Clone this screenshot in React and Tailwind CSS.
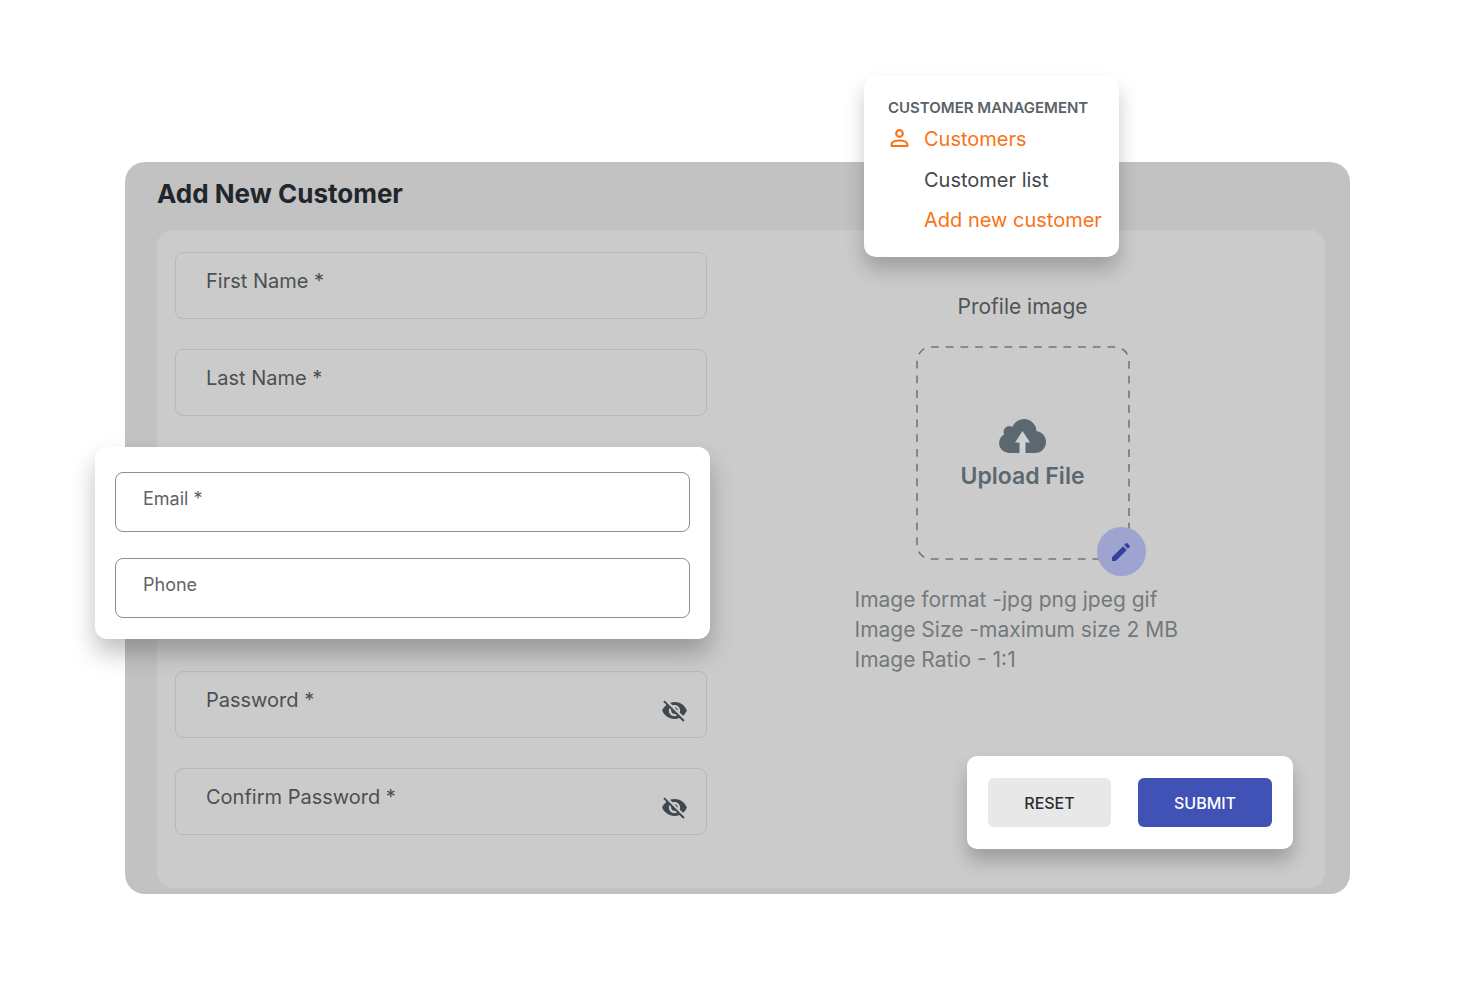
import { useState } from "react";
import { MdEdit, MdVisibility, MdVisibilityOff } from "react-icons/md";

function TextField({ id, label, type = "text" }) {
  return (
    <div className="flex h-[67px] items-start rounded-lg border border-[#b8b8b8] px-[30px] pt-3.5">
      <label htmlFor={id} className="whitespace-nowrap text-xl leading-7 text-[#4c5053]">
        {label}
      </label>
      <input id={id} type={type} className="h-7 min-w-0 flex-1 bg-transparent pl-3 outline-none" />
    </div>
  );
}

function PasswordField({ id, label }) {
  const [visible, setVisible] = useState(false);

  return (
    <div className="flex h-[67px] items-start rounded-lg border border-[#b8b8b8] pl-[30px] pr-[18px] pt-3.5">
      <label htmlFor={id} className="whitespace-nowrap text-xl leading-7 text-[#4c5053]">
        {label}
      </label>
      <input
        id={id}
        type={visible ? "text" : "password"}
        className="h-7 min-w-0 flex-1 bg-transparent pl-3 outline-none"
      />
      <button
        type="button"
        aria-label={visible ? "Hide password" : "Show password"}
        onClick={() => setVisible(!visible)}
        className="mt-[11px] text-[#41484d]"
      >
        {visible ? <MdVisibility size={27} /> : <MdVisibilityOff size={27} />}
      </button>
    </div>
  );
}

function ContactField({ id, label, type }) {
  return (
    <div className="flex h-[60px] items-start rounded-lg border border-[#8f8f8f] px-[27px] pt-3">
      <label htmlFor={id} className="whitespace-nowrap text-lg leading-7 text-[#5f6368]">
        {label}
      </label>
      <input id={id} type={type} className="h-7 min-w-0 flex-1 bg-transparent pl-3 outline-none" />
    </div>
  );
}

function PersonIcon() {
  return (
    <svg width="24" height="20" viewBox="0 0 24 20" fill="none" stroke="currentColor" strokeWidth="2.2" aria-hidden="true">
      <circle cx="11.5" cy="4.500" r="3.300" />
      <path d="M3.600 17v-1.600c0-2.600 4-3.900 7.900-3.900s7.900 1.300 7.900 3.900V17z" strokeLinejoin="round" />
    </svg>
  );
}

function CloudIcon() {
  return (
    <svg width="47" height="34" viewBox="0 0 47 34" aria-hidden="true">
      <g fill="#5c6870">
        <circle cx="25" cy="12.5" r="12.5" />
        <circle cx="10.5" cy="13" r="6" />
        <circle cx="10" cy="24" r="10" />
        <circle cx="36" cy="23" r="11" />
        <path d="M10 12h26v22H10z" />
      </g>
      <path d="M23.5 12 31 23.500H26.500V34h-6V23.500H16z" fill="#cfd2d3" />
    </svg>
  );
}

function CustomerMenu() {
  return (
    <nav className="absolute -top-[86px] right-[231px] w-[255px] rounded-xl bg-white px-6 pb-[17px] pt-[22px] shadow-[0_12px_20px_rgba(0,0,0,0.22)]">
      <h2 className="whitespace-nowrap text-[15px] font-semibold leading-5 text-[#5a6268]">
        CUSTOMER MANAGEMENT
      </h2>
      <a href="#customers" className="flex h-[42px] items-center gap-3 text-xl text-[#f97316]">
        <PersonIcon />
        Customers
      </a>
      <ul className="whitespace-nowrap pl-9 text-xl text-[#44484c]">
        <li>
          <a href="#list" className="flex h-10 items-center">
            Customer list
          </a>
        </li>
        <li>
          <a href="#new" className="flex h-10 items-center text-[#f97316]">
            Add new customer
          </a>
        </li>
      </ul>
    </nav>
  );
}

function ProfileImage() {
  return (
    <div className="flex flex-col items-center">
      <p className="text-[21px] leading-7 text-[#4f5457]">Profile image</p>
      <div className="relative mt-[25px] size-[214px]">
        <svg className="absolute inset-0" width="214" height="214" aria-hidden="true">
          <rect
            x="1"
            y="1"
            width="212"
            height="212"
            rx="14"
            fill="none"
            stroke="#70777b"
            strokeWidth="1.6"
            pathLength="840"
            strokeDasharray="8 7"
          />
        </svg>
        <label
          htmlFor="profileImage"
          className="flex h-full cursor-pointer flex-col items-center gap-[7px] pt-[73px] text-[23px] font-semibold leading-8 text-[#5c6870]"
        >
          <CloudIcon />
          Upload File
        </label>
        <input id="profileImage" type="file" accept="image/*" className="sr-only" />
        <button
          type="button"
          aria-label="Edit image"
          className="absolute -bottom-4 -right-4 flex size-[49px] items-center justify-center rounded-full bg-[#9ea4d0] text-[#34409a]"
        >
          <MdEdit size={24} />
        </button>
      </div>
      <p className="mt-[25px] w-[336px] whitespace-nowrap text-[21px] leading-[30px] text-[#74797c]">
        Image format -jpg png jpeg gif
        <br />
        Image Size -maximum size 2 MB
        <br />
        Image Ratio - 1:1
      </p>
    </div>
  );
}

export default function App() {
  return (
    <div className="min-h-screen bg-white pb-24 pl-[125px] pr-[118px] pt-[162px] font-['Inter','Liberation_Sans',sans-serif]">
      <main className="relative rounded-[20px] bg-[#c2c2c2] pb-1.5 pl-8 pr-[25px] pt-3.5">
        <h1 className="text-[26px] font-bold leading-9 text-[#20262b]">Add New Customer</h1>

        <form
          onSubmit={(e) => e.preventDefault()}
          className="mt-[18px] grid grid-cols-[532fr_541fr] gap-[45px] rounded-2xl bg-[#cbcbcb] pb-[39px] pl-[18px] pr-8 pt-[22px]"
        >
          <div className="flex flex-col gap-[30px] pb-3.5">
            <TextField id="firstName" label="First Name *" />
            <TextField id="lastName" label="Last Name *" />

            {/* Contact details card */}
            <div className="-ml-20 -mr-[3px] mb-0.5 mt-px flex flex-col gap-[26px] rounded-xl bg-white px-5 pb-[21px] pt-[25px] shadow-[0_14px_24px_rgba(0,0,0,0.25)]">
              <ContactField id="email" label="Email *" type="email" />
              <ContactField id="phone" label="Phone" type="tel" />
            </div>

            <PasswordField id="password" label="Password *" />
            <PasswordField id="confirmPassword" label="Confirm Password *" />
          </div>

          <div className="flex flex-col justify-between pt-[41px]">
            <ProfileImage />

            {/* Form actions */}
            <div className="flex gap-[27px] self-end rounded-[10px] bg-white px-[21px] py-[22px] text-base font-medium shadow-[0_12px_18px_rgba(0,0,0,0.22)]">
              <button type="reset" className="h-[49px] w-[123px] rounded-md bg-[#e8e8e8] text-[#2e2e2e]">
                RESET
              </button>
              <button type="submit" className="h-[49px] w-[134px] rounded-md bg-[#4052b5] text-white">
                SUBMIT
              </button>
            </div>
          </div>
        </form>

        <CustomerMenu />
      </main>
    </div>
  );
}
